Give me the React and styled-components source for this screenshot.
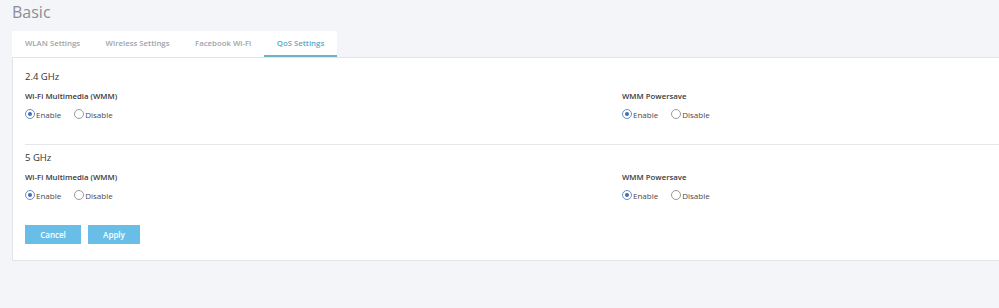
import styled, { createGlobalStyle } from "styled-components";

const Global = createGlobalStyle`
  html, body {
    margin: 0;
    padding: 0;
    background: #f4f5f9;
    font-family: "Open Sans", "Liberation Sans", sans-serif;
  }
`;

const Page = styled.div`
  width: 999px;
  height: 308px;
  padding-left: 12px;
  box-sizing: border-box;
  overflow: hidden;
`;

const Title = styled.h1`
  margin: 0;
  padding-top: 2px;
  height: 27px;
  font-size: 16px;
  font-weight: 400;
  color: #8a8d93;
  line-height: 20px;
`;

const TabBar = styled.div`
  display: inline-flex;
  background: #fff;
  height: 26px;
  align-items: stretch;
`;

const Tab = styled.div`
  display: flex;
  align-items: center;
  padding: 0 12.5px 0 13px;
  font-size: 7.8px;
  font-weight: 600;
  color: ${(p) => (p.$active ? "#59a9c9" : "#a0a3a8")};
  border-bottom: 2px solid ${(p) => (p.$active ? "#6bb3c7" : "transparent")};
  box-sizing: border-box;
`;

const Panel = styled.div`
  background: #fff;
  border: 1px solid #e2e4e8;
  border-right: none;
  padding: 12px 0 16px 12px;
`;

const Section = styled.div`
  display: flex;
  flex-direction: column;
`;

const Heading = styled.div`
  font-size: 9.5px;
  font-weight: 500;
  color: #333;
  line-height: 14px;
  margin-bottom: 5px;
`;

const Columns = styled.div`
  display: grid;
  grid-template-columns: 597px 1fr;
`;

const Field = styled.div`
  display: flex;
  flex-direction: column;
  gap: 4px;
`;

const Label = styled.div`
  font-size: 7.8px;
  font-weight: 600;
  color: #3a3a3a;
  line-height: 14px;
`;

const RadioRow = styled.div`
  display: flex;
  align-items: center;
  height: 14px;
  gap: 13px;
`;

const Option = styled.label`
  display: flex;
  align-items: center;
  gap: 1px;
  font-size: 8px;
  color: #4a4a4a;
`;

const Circle = styled.span`
  width: 10px;
  height: 10px;
  box-sizing: border-box;
  border-radius: 50%;
  border: 1px solid ${(p) => (p.$on ? "#6a8fc8" : "#9a9a9a")};
  display: flex;
  align-items: center;
  justify-content: center;
  &::after {
    content: "";
    width: 4px;
    height: 4px;
    border-radius: 50%;
    background: ${(p) => (p.$on ? "#3d6fb8" : "transparent")};
  }
`;

const Divider = styled.hr`
  border: none;
  border-top: 1px solid #e6e7ea;
  margin: 23px 0 6px;
`;

const Actions = styled.div`
  display: flex;
  gap: 7px;
  margin-top: 23px;
`;

const Button = styled.button`
  width: ${(p) => p.$w}px;
  height: 19px;
  border: none;
  background: #68bee6;
  color: #fff;
  font-family: "Open Sans", "Liberation Sans", sans-serif;
  font-size: 8px;
  font-weight: 600;
  padding: 0;
`;

const Radios = () => (
  <RadioRow>
    <Option>
      <Circle $on />
      Enable
    </Option>
    <Option>
      <Circle />
      Disable
    </Option>
  </RadioRow>
);

const Band = ({ name }) => (
  <Section>
    <Heading>{name}</Heading>
    <Columns>
      <Field>
        <Label>Wi-Fi Multimedia (WMM)</Label>
        <Radios />
      </Field>
      <Field>
        <Label>WMM Powersave</Label>
        <Radios />
      </Field>
    </Columns>
  </Section>
);

export default function App() {
  return (
    <Page>
      <Global />
      <Title>Basic</Title>
      <TabBar>
        <Tab>WLAN Settings</Tab>
        <Tab>Wireless Settings</Tab>
        <Tab>Facebook Wi-Fi</Tab>
        <Tab $active>QoS Settings</Tab>
      </TabBar>
      <Panel>
        <Band name="2.4 GHz" />
        <Divider />
        <Band name="5 GHz" />
        <Actions>
          <Button $w={56}>Cancel</Button>
          <Button $w={52}>Apply</Button>
        </Actions>
      </Panel>
    </Page>
  );
}
